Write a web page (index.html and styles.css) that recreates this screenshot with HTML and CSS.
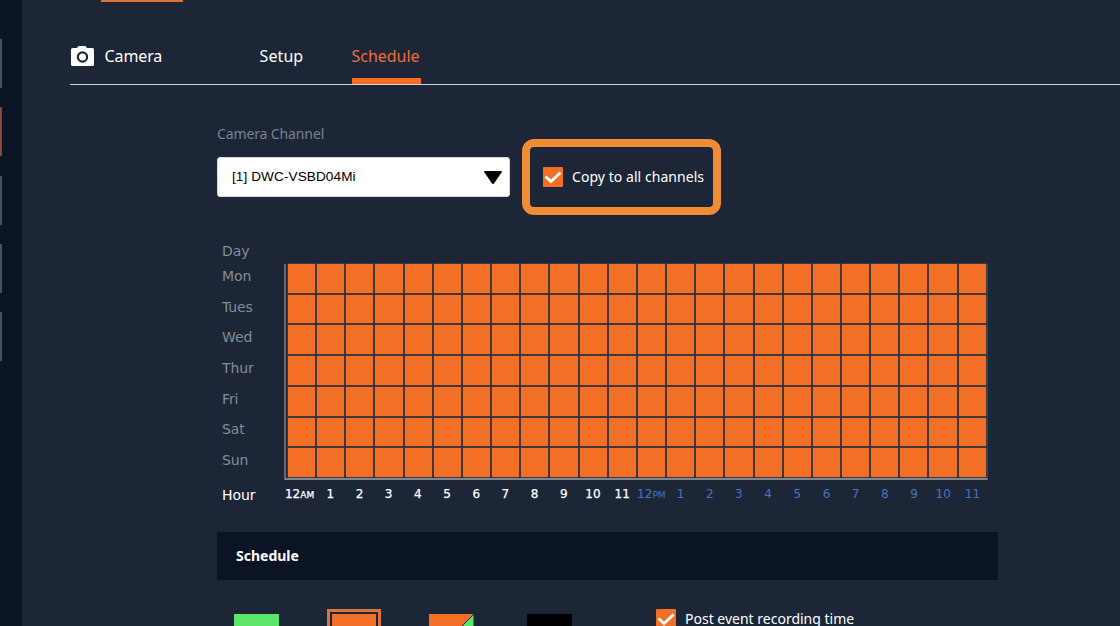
FILE: index.html
```html
<!DOCTYPE html>
<html lang="en">
<head>
<meta charset="utf-8">
<title>Camera Schedule</title>
<link rel="stylesheet" href="styles.css">
</head>
<body>
<div class="app">
  <aside class="rail"><i></i><i class="active"></i><i></i><i></i><i></i></aside>
  <main class="main">
    <div class="topbar"><div class="top-tab"></div></div>
    <header class="header">
      <svg class="camera" viewBox="0 0 24 22" width="24" height="22"><path fill="#fff" d="M3 3H7L8 1.500Q8.400 1 9 1h6q.6 0 1 .5L17 3h5.500Q24 3 24 4.500v15q0 1.500-1.500 1.500h-20Q1 21 1 19.500v-15Q1 3 3 3Z"/><circle cx="12.500" cy="12" r="4.600" fill="none" stroke="#1c2637" stroke-width="2.200"/></svg>
      <span class="title">Camera</span>
      <nav class="tabs"><a class="tab setup">Setup</a><a class="tab current">Schedule</a></nav>
    </header>
    <section class="content">
      <div class="label">Camera Channel</div>
      <div class="channel">
        <div class="select"><span>[1] DWC-VSBD04Mi</span><svg width="20" height="15" viewBox="0 0 20 15"><path d="M2 1h16q1.500 0 .7 1.300l-7.500 11q-1.200 1.500-2.400 0l-7.500-11Q.5 1 2 1Z"/></svg></div>
        <div class="copy"><svg class="check" viewBox="0 0 20 20"><rect width="20" height="20" rx="1" fill="#f36f25"/><path d="m2.500 9.500 5.500 5L17.500 5.500" fill="none" stroke="#fff" stroke-width="3"/></svg><span class="copy-text">Copy to all channels</span></div>
      </div>
      <div class="planner">
        <div class="days"><span class="day-head">Day</span><span>Mon</span><span>Tues</span><span>Wed</span><span>Thur</span><span>Fri</span><span>Sat</span><span>Sun</span><span class="hour">Hour</span></div>
        <div class="chart">
          <div class="grid" id="grid"></div>
          <div class="hours" id="hours"></div>
        </div>
      </div>
      <div class="panel-title"><span>Schedule</span></div>
      <div class="legend">
        <div class="swatch green"></div>
        <div class="selected"><div class="swatch orange"></div></div>
        <svg class="swatch split" viewBox="0 0 45 30"><path fill="#f36f25" d="M0 0h45v30H0z"/><path fill="#5be668" stroke="#1c2637" d="M45 0v30H15z"/></svg>
        <div class="swatch black"></div>
        <div class="post"><svg class="check" viewBox="0 0 20 20"><rect width="20" height="20" rx="1" fill="#f36f25"/><path d="m2.500 9.500 5.500 5L17.500 5.500" fill="none" stroke="#fff" stroke-width="3"/></svg><span class="post-text">Post event recording time</span></div>
      </div>
    </section>
  </main>
</div>
<script src="schedule.js"></script>
</body>
</html>
```
FILE: styles.css
```css
* { box-sizing: border-box; }
body { margin: 0; background: #1c2637; color: #fff; font-family: "Noto Sans", sans-serif; overflow: hidden; }
.app { display: flex; width: 1120px; height: 626px; overflow: hidden; }
.rail { flex: 0 0 22px; background: #0a1424; padding-top: 39px; display: flex; flex-direction: column; gap: 19.300px; }
.rail i { width: 2px; height: 49px; background: #485263; }
.rail .active { background: #8a4b3c; border-top: 1px solid #485263; border-right: 1px solid #485263; }
.main { flex: 1; min-width: 0; }
.topbar { height: 2px; padding-left: 79px; }
.top-tab { width: 82px; height: 2px; background: #dc7438; }
.header { height: 83px; margin-left: 48px; border-bottom: 1px solid #d2dae0; display: flex; align-items: flex-start; font-size: 16px; line-height: 22px; }
.camera { margin-top: 43px; }
.title { margin: 43px 0 0 10.500px; width: 155px; letter-spacing: -.1px; }
.tabs { display: flex; height: 82px; }
.tab { padding-top: 43px; height: 82px; }
.setup { width: 92px; letter-spacing: .1px; }
.current { width: 69px; color: #f06d38; border-bottom: 6px solid #f36f25; letter-spacing: -.03px; white-space: nowrap; }
.content { padding-left: 195px; }
.label { height: 72px; padding-top: 38.500px; font-size: 14px; line-height: 20px; color: #788391; letter-spacing: -.12px; }
.channel { display: flex; height: 80px; }
.select { display: flex; align-items: center; justify-content: space-between; width: 293px; height: 40px; padding: 0 6px 1px 14px; background: #fff; border: 1px solid #d5d9df; border-radius: 3px; color: #000; font: 13.600px "Liberation Sans", sans-serif; letter-spacing: .08px; }
.select svg { margin-top: 2px; }
.copy { display: flex; align-items: center; width: 199px; height: 76px; margin: -18px 0 0 12px; padding: 0 0 1px 13px; border: 8px solid #ef8c34; border-radius: 12px; gap: 9px; white-space: nowrap; font-size: 14px; letter-spacing: .05px; }
.check { width: 20px; height: 20px; flex: none; }
.planner { display: flex; height: 295px; }
.days { width: 67px; padding-left: 5px; display: flex; flex-direction: column; font: 14px/20px "DejaVu Sans", sans-serif; letter-spacing: -.1px; color: #848c98; padding-top: 4px; }
.days span { height: 30.660px; flex: none; }
.days .day-head { height: 25px; }
.days .hour { color: #fff; padding-top: 4px; }
.chart { padding-top: 27px; width: 705px; }
.grid { width: 704px; height: 216px; display: grid; grid-template-columns: repeat(24, 27.170px); grid-template-rows: repeat(7, 1fr); gap: 2px; padding: 0 0 1px 2px; border-left: 2px solid #5f6b7b; border-bottom: 2px solid #7b8795; border-right: 1px solid #384355; }
.grid i { background: #f36f25; box-shadow: 0 0 0 .500px #69483f; }
.hours { display: grid; grid-template-columns: repeat(24, 29.200px); padding: 4px 0 0 2.500px; font: 12px/20px "DejaVu Sans", sans-serif; text-align: center; white-space: nowrap; -webkit-text-stroke: .25px #fff; }
.hours span:first-child { margin-left: -3px; }
.hours .pm { color: #4a73c0; -webkit-text-stroke: 0; }
.hours small { font-size: 9px; }
.panel-title { width: 781px; height: 48px; background: #0a1424; padding-left: 19px; font-size: 14px; line-height: 48px; font-weight: 700; }
.legend { display: flex; align-items: flex-start; padding: 34px 0 0 17px; height: 64px; }
.swatch { width: 45px; height: 30px; }
.green { background: #5be668; }
.selected { margin: -5px 0 0 48px; border: 3px solid #db733d; padding: 2px; width: 54px; }
.orange { background: #f36f25; width: 44px; }
.split { margin-left: 48px; }
.black { margin-left: 53px; background: #000; }
.post { display: flex; align-items: center; gap: 9px; margin: -5px 0 0 84px; white-space: nowrap; font-size: 14px; line-height: 20px; }
```
FILE: schedule.js
```js
const grid = document.getElementById('grid');
const hours = document.getElementById('hours');
for (let i = 0; i < 168; i++) grid.append(document.createElement('i'));
for (let h = 0; h < 24; h++) {
  const label = document.createElement('span');
  if (h > 11) label.className = 'pm';
  label.textContent = h % 12 || 12;
  if (h % 12 === 0) {
    const suffix = document.createElement('small');
    suffix.textContent = h ? 'PM' : 'AM';
    label.append(suffix);
  }
  hours.append(label);
}
```
